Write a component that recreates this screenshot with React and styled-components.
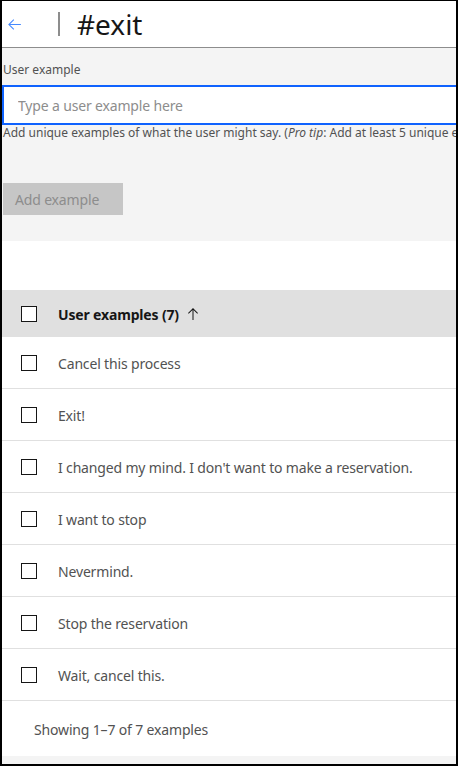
import React from 'react';
import styled, { createGlobalStyle } from 'styled-components';

const GlobalStyle = createGlobalStyle`
  html, body {
    margin: 0;
    padding: 0;
    background: #ffffff;
  }
  * {
    box-sizing: border-box;
  }
`;

const Frame = styled.div`
  width: 458px;
  height: 766px;
  border-top: 1px solid #000;
  border-left: 2px solid #000;
  border-right: 2px solid #000;
  border-bottom: 2px solid #000;
  overflow: hidden;
  display: flex;
  flex-direction: column;
  font-family: 'Noto Sans', 'Liberation Sans', sans-serif;
  color: #161616;
  background: #fff;
`;

const Header = styled.header`
  height: 47px;
  flex: none;
  display: flex;
  align-items: center;
  border-bottom: 1px solid #8d8d8d;
  padding-left: 4px;
`;

const BackButton = styled.button`
  border: none;
  background: none;
  padding: 0;
  width: 17px;
  height: 17px;
  display: flex;
  align-items: center;
  justify-content: center;
  color: #4589ff;
  cursor: pointer;
`;

const Divider = styled.span`
  width: 2px;
  height: 24px;
  background: #8d8d8d;
  margin-left: 35px;
  margin-right: 17px;
`;

const Title = styled.h1`
  margin: 0;
  font-size: 28px;
  font-weight: 400;
  line-height: 36px;
  color: #161616;
`;

const FormSection = styled.section`
  flex: none;
  width: 700px;
  background: #f4f4f4;
  padding: 14px 0 26px 1px;
`;

const Label = styled.label`
  display: block;
  font-size: 12px;
  line-height: 16px;
  color: #525252;
  margin-bottom: 7px;
`;

const TextInput = styled.input`
  display: block;
  width: 100%;
  height: 40px;
  margin-left: -1px;
  border: 2px solid #0f62fe;
  background: #fff;
  padding: 0 14px;
  font-family: inherit;
  font-size: 14px;
  letter-spacing: -0.16px;
  color: #161616;
  outline: none;
  caret-color: #161616;

  &::placeholder {
    color: #8d8d8d;
  }
`;

const Helper = styled.p`
  margin: 0;
  font-size: 12px;
  line-height: 16px;
  color: #525252;
  white-space: nowrap;
`;

const AddButton = styled.button`
  display: block;
  margin-top: 42px;
  width: 120px;
  height: 32px;
  border: none;
  background: #c6c6c6;
  color: #8d8d8d;
  font-family: inherit;
  font-size: 14px;
  letter-spacing: -0.16px;
  text-align: left;
  padding: 0 12px;
  cursor: not-allowed;
`;

const Spacer = styled.div`
  flex: none;
  height: 49px;
`;

const Table = styled.div`
  flex: none;
  display: flex;
  flex-direction: column;
`;

const HeadRow = styled.div`
  height: 47px;
  display: flex;
  align-items: center;
  background: #e0e0e0;
  padding: 1px 0 0 19px;
  font-size: 14px;
  font-weight: 700;
  letter-spacing: -0.16px;
  color: #161616;
`;

const Row = styled.div`
  height: 52px;
  display: flex;
  align-items: center;
  padding: 1px 0 0 19px;
  border-bottom: 1px solid #e0e0e0;
  font-size: 14px;
  letter-spacing: -0.16px;
  color: #525252;
`;

const Box = styled.span`
  flex: none;
  width: 16px;
  height: 16px;
  border: 1px solid #161616;
  background: #fff;
  margin: -1px 21px 0 0;
`;

const SortIcon = styled.svg`
  margin-left: 6px;
  width: 16px;
  height: 16px;
  fill: #161616;
`;

const Footer = styled.div`
  flex: none;
  height: 55px;
  display: flex;
  align-items: center;
  padding: 2px 0 0 32px;
  font-size: 14px;
  letter-spacing: -0.16px;
  color: #525252;
`;

const Bottom = styled.div`
  flex: 1;
  background: #f4f4f4;
`;

const examples = [
  'Cancel this process',
  'Exit!',
  "I changed my mind. I don't want to make a reservation.",
  'I want to stop',
  'Nevermind.',
  'Stop the reservation',
  'Wait, cancel this.',
];

export default function App() {
  return (
    <>
      <GlobalStyle />
      <Frame>
        <Header>
          <BackButton aria-label="Back">
            <svg width="17" height="17" viewBox="0 0 32 32" fill="currentColor">
              <path d="M14 26l1.41-1.41L7.83 17H28v-2H7.83l7.58-7.59L14 6 4 16 14 26z" />
            </svg>
          </BackButton>
          <Divider />
          <Title>#exit</Title>
        </Header>

        <FormSection>
          <Label>User example</Label>
          <TextInput placeholder="Type a user example here" autoFocus />
          <Helper>
            Add unique examples of what the user might say. (<i>Pro tip</i>: Add at least 5 unique examples to help Watson Assistant learn)
          </Helper>
          <AddButton disabled>Add example</AddButton>
        </FormSection>

        <Spacer />

        <Table>
          <HeadRow>
            <Box />
            User examples (7)
            <SortIcon viewBox="0 0 32 32">
              <path d="M16 4L6 14l1.41 1.41L15 7.83V28h2V7.83l7.59 7.58L26 14 16 4z" />
            </SortIcon>
          </HeadRow>
          {examples.map((text) => (
            <Row key={text}>
              <Box />
              {text}
            </Row>
          ))}
        </Table>

        <Footer>Showing 1–7 of 7 examples</Footer>
        <Bottom />
      </Frame>
    </>
  );
}
